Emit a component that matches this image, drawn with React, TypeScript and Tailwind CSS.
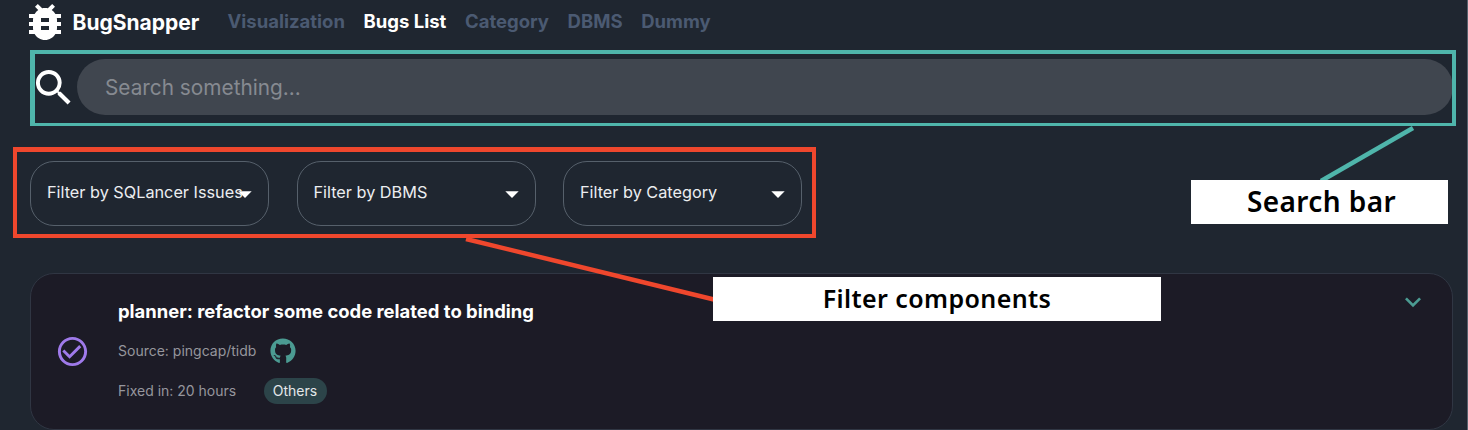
import React from "react";
import { MdBugReport, MdSearch, MdArrowDropDown, MdCheckCircleOutline, MdKeyboardArrowDown } from "react-icons/md";
import { FaGithub } from "react-icons/fa";

const filters = ["Filter by SQLancer Issues", "Filter by DBMS", "Filter by Category"];
const links = ["Visualization", "Bugs List", "Category", "DBMS", "Dummy"];

export default function App() {
  return (
    <div className="relative flex h-[430px] w-[1468px] flex-col overflow-hidden border-r border-[#56616d] bg-[#1f2630] font-['Inter',sans-serif]">
      <nav className="flex h-[50px] shrink-0 items-start pl-[21px]">
        <MdBugReport className="-mt-[2px] size-12 shrink-0 text-white" />
        <span className="ml-[3.5px] mt-[8.5px] w-[127px] text-[21px] leading-7 font-bold text-white">BugSnapper</span>
        <div className="ml-[28px] mt-[7px] flex gap-[18.6px] text-[18.5px] leading-7 font-bold">
          {links.map((l) => (
            <a key={l} className={l === "Bugs List" ? "text-white" : "text-[#4b5a72]"}>{l}</a>
          ))}
        </div>
      </nav>

      <div className="relative ml-[30px] flex h-[76px] w-[1426px] shrink-0 items-start">
        <MdSearch className="mt-[14px] size-[47.5px] shrink-0 text-white" />
        <div className="mt-[9px] ml-[-0.5px] flex h-[56px] w-[1376px] items-center rounded-full bg-[#40464f] pt-[2px] pl-7 text-[20.8px] text-[#868a91]">
          Search something...
        </div>
        <div className="absolute inset-0 border-[5px] border-t-4 border-r-4 border-b-[3px] border-[#4fb5ab]" />
      </div>

      <div className="mt-[21px] ml-[13px] flex h-[91px] w-[803px] shrink-0 gap-[27.5px] border-[4px] border-t-[5px] border-[#ef472d] pt-[9px] pl-[13.3px]">
        {filters.map((f) => (
          <div key={f} className="relative flex h-[65px] w-[239px] shrink-0 rounded-[24px] border border-[#56606b] pt-[18px] pl-[15.7px] text-[16.25px] leading-6 text-[#eceef0]">
            <span className="whitespace-nowrap">{f}</span>
            <MdArrowDropDown className="absolute top-[16px] right-[7px] size-8 text-white" />
          </div>
        ))}
      </div>

      <main className="mt-[35px] ml-[30px] flex h-[157px] w-[1423px] shrink-0 rounded-[24px] border border-[#303643] bg-[#1c1b26]">
        <MdCheckCircleOutline className="mt-[60px] ml-[23.5px] size-[35px] shrink-0 text-[#9f7aea]" />
        <div className="ml-[28.5px] flex flex-col text-[14px] text-[#96969d]">
          <h2 className="mt-[23px] text-[18.45px] leading-7 font-bold text-white">planner: refactor some code related to binding</h2>
          <div className="mt-[11px] flex h-7 items-center">
            <span className="w-[138px] pt-px whitespace-nowrap">Source: pingcap/tidb</span>
            <FaGithub className="mt-px ml-[14px] size-[26px] text-[#4b9b92]" />
          </div>
          <div className="mt-[12px] flex h-7 items-center">
            <span className="w-[145.5px]">Fixed in: 20 hours</span>
            <span className="mt-[1px] flex h-[26px] w-[63px] items-center justify-center rounded-full bg-[#2c4449] text-[#e3e8e9]">Others</span>
          </div>
        </div>
        <MdKeyboardArrowDown className="mt-[12px] mr-[23px] ml-auto size-8 text-[#4b9b92]" />
      </main>

      <svg className="pointer-events-none absolute inset-0" width="1468" height="430" fill="none">
        <path d="M1413 128L1321 181" stroke="#4fb5ab" strokeWidth="4.5" />
        <path d="M466 239L716 300" stroke="#ef472d" strokeWidth="4.5" />
      </svg>
      <div className="absolute top-[180px] left-[1191px] flex h-[44px] w-[257px] items-center justify-center bg-white pb-[2px] pl-1 font-['Noto_Sans',sans-serif] text-[28px] font-semibold tracking-[0.4px] text-black">Search bar</div>
      <div className="absolute top-[277px] left-[713px] flex h-[44px] w-[448px] items-center justify-center bg-white font-['Noto_Sans',sans-serif] text-[25px] font-semibold tracking-[0.4px] text-black">Filter components</div>
    </div>
  );
}
